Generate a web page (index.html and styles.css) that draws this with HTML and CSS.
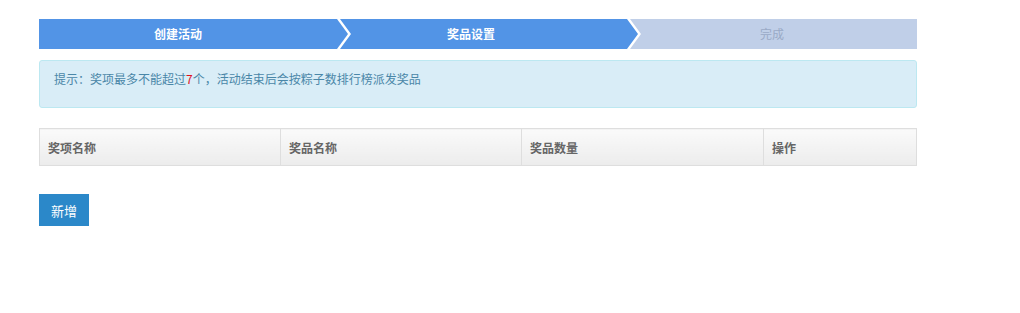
FILE: index.html
```html
<!DOCTYPE html>
<html>
<head>
<meta charset="utf-8">
<title>奖品设置</title>
<link rel="stylesheet" href="styles.css">
</head>
<body>
	<div class="page">
		<div class="steps">
			<div class="step step-first done">创建活动</div>
			<div class="step step-mid done">奖品设置</div>
			<div class="step step-last">完成</div>
		</div>
		<div class="tip">提示：奖项最多不能超过<span class="num">7</span>个，活动结束后会按粽子数排行榜派发奖品</div>
		<table class="prizes">
			<thead>
				<tr>
					<th class="col-a">奖项名称</th>
					<th class="col-b">奖品名称</th>
					<th class="col-c">奖品数量</th>
					<th class="col-d">操作</th>
				</tr>
			</thead>
		</table>
		<button class="btn-add">新增</button>
	</div>
</body>
</html>
```
FILE: styles.css
```css
*{
	margin: 0;
	padding: 0;
	box-sizing: border-box;
}
body{
	font-family: "Noto Sans CJK SC", "Noto Sans", sans-serif;
	font-size: 12px;
	color: #333;
	background: #fff;
}
.page{
	width: 878px;
	margin-left: 39px;
	padding-top: 19px;
}
.steps{
	display: flex;
	height: 30px;
}
.step{
	height: 30px;
	line-height: 30px;
	text-align: center;
	font-weight: bold;
	font-size: 12px;
	background: #c0cfe8;
	color: #9aaac6;
}
.step.done{
	background: #5294e6;
	color: #fff;
}
.step-first{
	width: 309px;
	padding-right: 31px;
	clip-path: polygon(0 0, calc(100% - 11px) 0, 100% 50%, calc(100% - 11px) 100%, 0 100%);
}
.step-mid{
	width: 298px;
	margin-left: -8px;
	padding-right: 36px;
	clip-path: polygon(0 0, calc(100% - 11px) 0, 100% 50%, calc(100% - 11px) 100%, 0 100%, 11px 50%);
}
.step-last{
	width: 287px;
	margin-left: -8px;
	padding-right: 3px;
	font-weight: normal;
	clip-path: polygon(0 0, 100% 0, 100% 100%, 0 100%, 11px 50%);
}
.tip{
	margin-top: 11px;
	height: 48px;
	padding: 10px 14px;
	line-height: 16px;
	background: #d9edf7;
	border: 1px solid #bce8f1;
	border-radius: 3px;
	color: #4a87a8;
}
.tip .num{
	color: #e0101e;
}
.prizes{
	margin-top: 20px;
	width: 100%;
	border-collapse: collapse;
}
.prizes th{
	height: 37px;
	padding: 0 8px;
	text-align: left;
	font-weight: bold;
	color: #666;
	border: 1px solid #dedede;
	background: linear-gradient(#fafafa, #ececec);
}
.col-a{ width: 241px; }
.col-b{ width: 241px; }
.col-c{ width: 242px; }
.btn-add{
	display: block;
	margin-top: 28px;
	width: 50px;
	height: 32px;
	border: none;
	background: #2b88c9;
	color: #fff;
	font-family: inherit;
	font-size: 13px;
	cursor: pointer;
}
```
